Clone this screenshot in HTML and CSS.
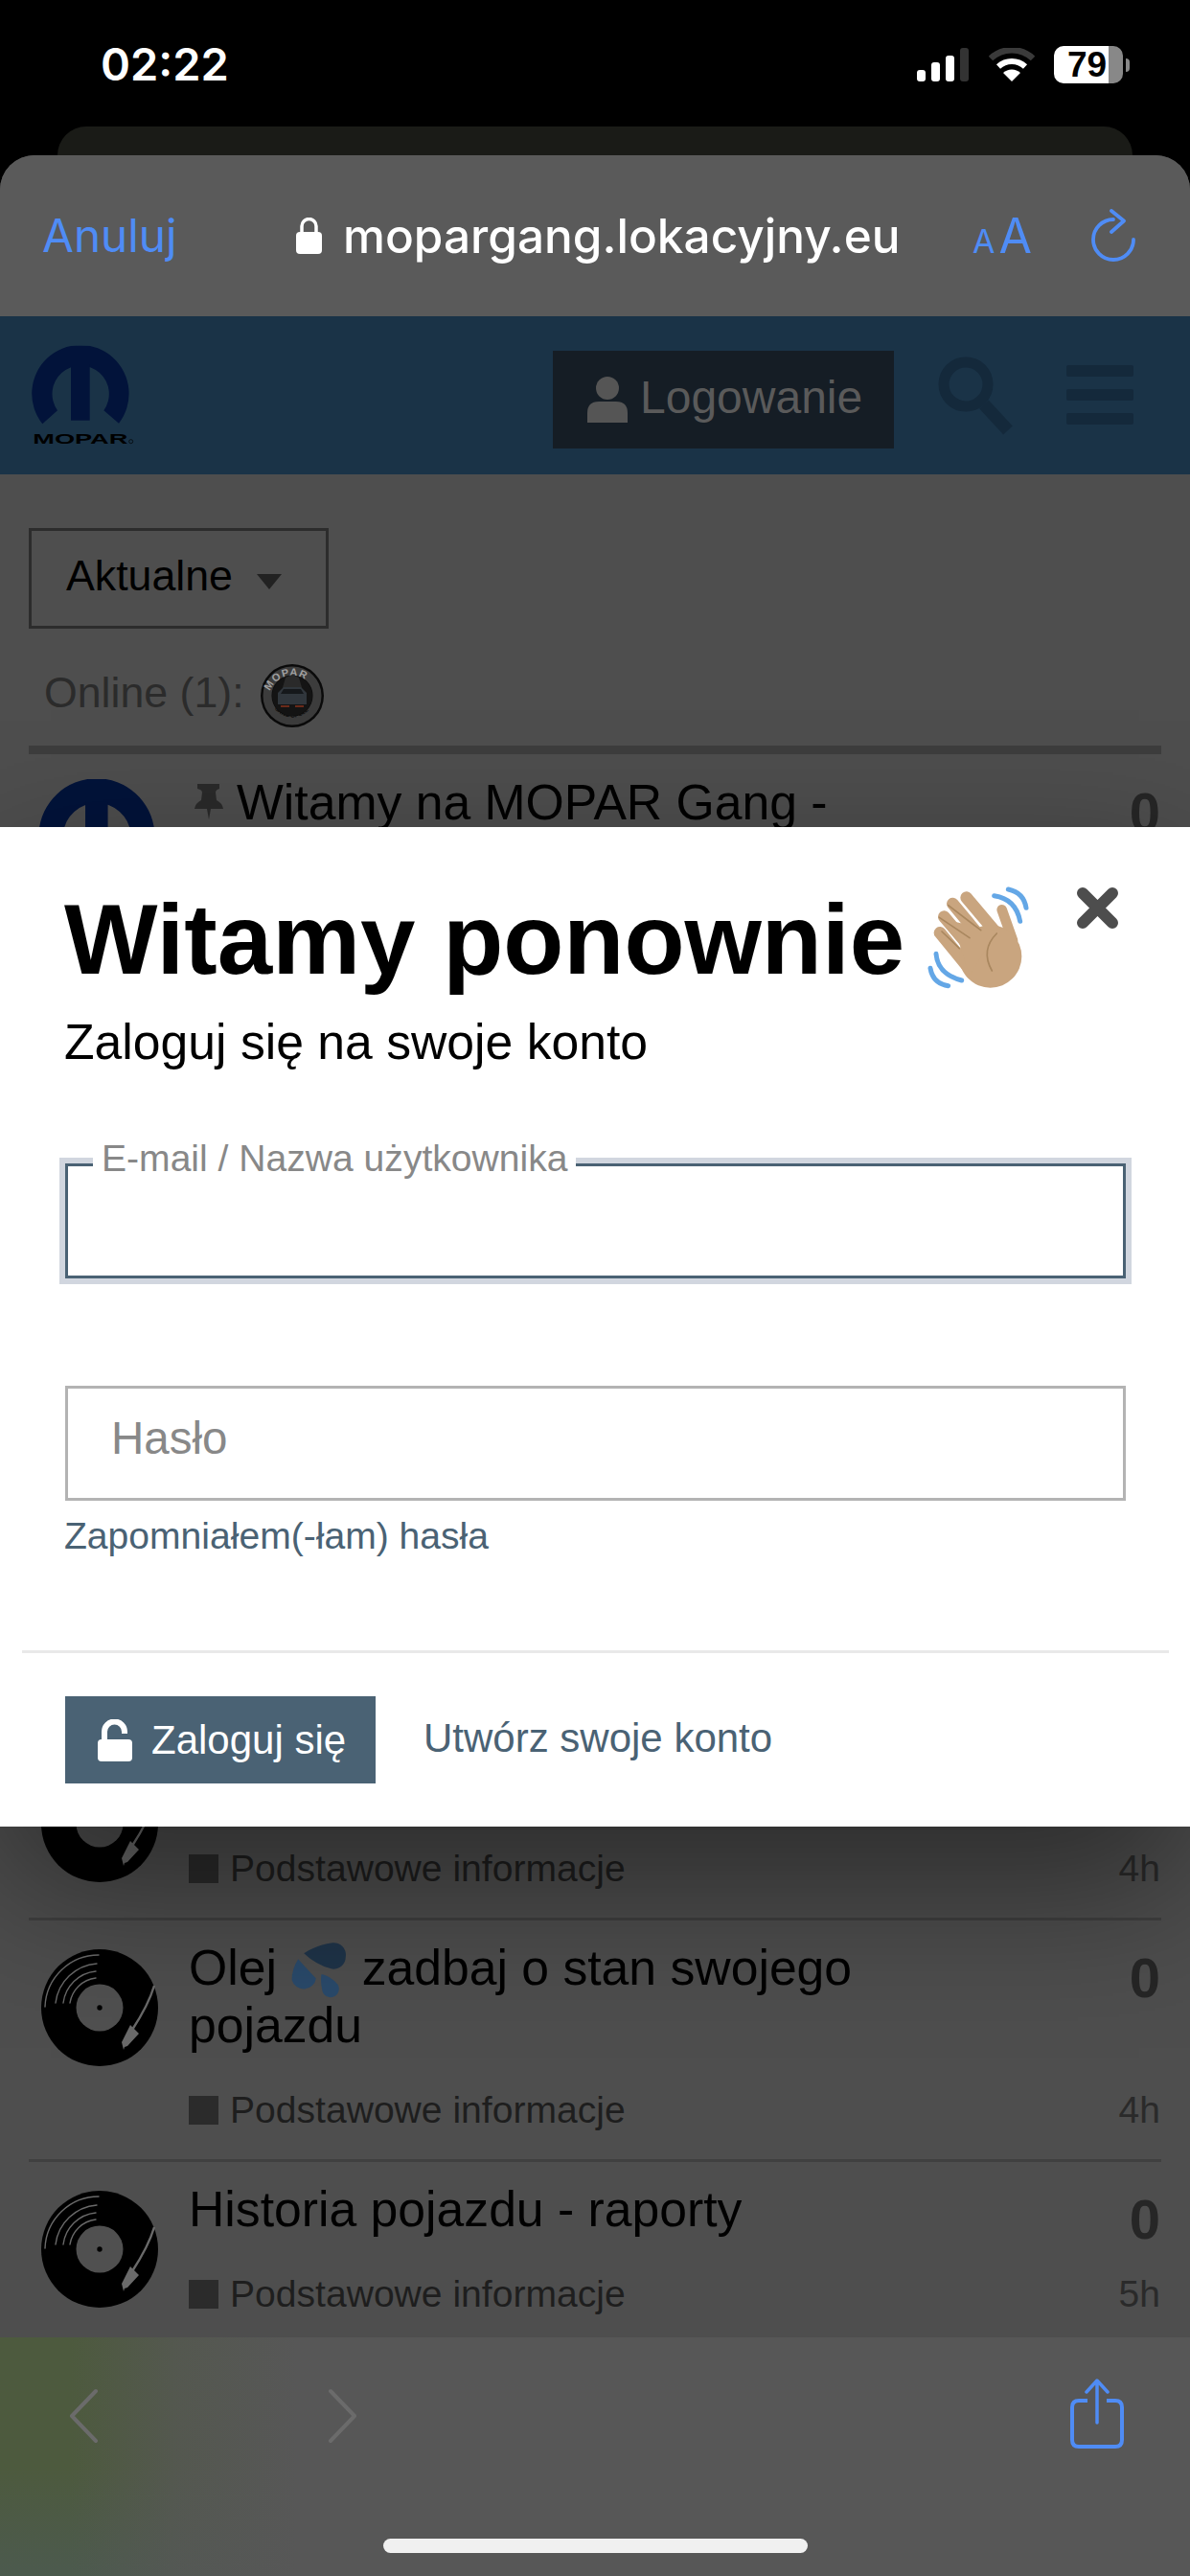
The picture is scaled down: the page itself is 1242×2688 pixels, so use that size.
FILE: index.html
```html
<!DOCTYPE html>
<html lang="pl">
<head>
<meta charset="utf-8">
<title>MOPAR Gang</title>
<link rel="stylesheet" href="styles.css">
</head>
<body>
<svg class="defs" aria-hidden="true">
  <defs>
    <symbol id="mopar-m" viewBox="99 62 306 246">
      <path d="M133 307A152 152 0 1 1 372 305L325 265A89 89 0 1 0 180 265Z"/>
      <rect x="222" y="120" width="59" height="176"/>
    </symbol>
    <symbol id="vinyl" viewBox="0 0 122 122">
      <circle cx="61" cy="61" r="61" fill="#000"/>
      <circle cx="61" cy="61" r="24.5" fill="#505050"/>
      <circle cx="61" cy="61" r="2.7" fill="#000"/>
      <g fill="none" stroke="#6a6a6a" stroke-width="1.4" stroke-linecap="round">
        <path d="M4 60A56 56 0 0 1 60 6"/>
        <path d="M15 56A47 47 0 0 1 58 15"/>
        <path d="M23 56A38 38 0 0 1 57 23"/>
        <path d="M30 56A31 31 0 0 1 57 30"/>
      </g>
      <path d="M118 38Q112 58 95 84" fill="none" stroke="#6a6a6a" stroke-width="2.4"/>
      <path d="M93 79L102 88L90 101L87 102L86 105L84 97Z" fill="#6a6a6a"/>
    </symbol>
  </defs>
</svg>
<div class="phone">
  <header class="status">
    <span class="clock">02:22</span>
    <div class="status-icons">
      <svg class="signal" viewBox="0 0 55 36"><rect x="0" y="23" width="9" height="12" rx="3" fill="#fff"/><rect x="15" y="15" width="9" height="20" rx="3" fill="#fff"/><rect x="30" y="8" width="9" height="27" rx="3" fill="#fff"/><rect x="45" y="0" width="9" height="35" rx="3" fill="#333"/></svg>
      <svg class="wifi" viewBox="0 0 48 36"><path d="M2 11A32 32 0 0 1 46 11" fill="none" stroke="#3a3a3a" stroke-width="6.5"/><path d="M10 19.5A20.5 20.5 0 0 1 38 19.5" fill="none" stroke="#fff" stroke-width="6"/><path d="M24 35L15 26A13 13 0 0 1 33 26Z" fill="#fff"/></svg>
      <div class="battery"><div class="battery-body"><span class="battery-num">79</span></div><div class="battery-nub"></div></div>
    </div>
  </header>
  <div class="backcard"></div>
  <div class="sheet">
    <nav class="urlbar">
      <span class="cancel">Anuluj</span>
      <div class="address">
        <svg class="urllock" viewBox="0 0 27 38"><path d="M6 17V9A7.500 7.500 0 0 1 21 9V17" fill="none" stroke="#fff" stroke-width="3.500"/><rect x="0" y="15" width="27" height="23" rx="4" fill="#fff"/></svg>
        <span class="url">mopargang.lokacyjny.eu</span>
      </div>
      <div class="aa"><span class="aa-small">A</span><span class="aa-large">A</span></div>
      <svg class="reload" viewBox="0 0 48 58"><path d="M45 32A21 21 0 1 1 24 11" fill="none" stroke="#4f8cf5" stroke-width="3.800" stroke-linecap="round"/><path d="M22 2L35 12.500L22 24" fill="none" stroke="#4f8cf5" stroke-width="3.800" stroke-linecap="round" stroke-linejoin="round"/></svg>
    </nav>

    <main class="page">
      <div class="site-header">
        <svg class="logo" viewBox="0 0 450 480">
          <use href="#mopar-m" x="99" y="62" width="306" height="246" fill="#02133a"/>
          <text x="103" y="368" textLength="297" lengthAdjust="spacingAndGlyphs" class="logo-text">MOPAR</text>
          <circle cx="410" cy="362" r="6" fill="none" stroke="#000" stroke-width="2"/>
        </svg>
        <div class="login-btn">
          <svg class="person" viewBox="0 0 42 48"><circle cx="21" cy="12" r="12" fill="#555"/><path d="M0 48V38Q0 26 12 26H30Q42 26 42 38V48Z" fill="#555"/></svg>
          <span class="login-text">Logowanie</span>
        </div>
        <svg class="search" viewBox="0 0 82 82"><circle cx="30" cy="29" r="23" fill="none" stroke="#14293b" stroke-width="11"/><path d="M49 50L74 77" stroke="#14293b" stroke-width="13"/></svg>
        <div class="burger"><i></i><i></i><i></i></div>
      </div>

      <div class="content">
        <div class="filter"><span class="filter-text">Aktualne</span><i class="caret"></i></div>
        <div class="online">
          <span class="online-text">Online (1):</span>
          <svg class="online-avatar" viewBox="0 0 66 66">
            <circle cx="33" cy="33" r="33" fill="#0a0a0a"/>
            <circle cx="33" cy="33" r="26" fill="none" stroke="#3c3c3c" stroke-width="9"/>
            <path id="arc-top" d="M8 37A25 25 0 0 1 58 37" fill="none"/>
            <text class="badge-text"><textPath href="#arc-top" startOffset="9">MOPAR</textPath></text>
            <path id="arc-bottom" d="M12 42A23 23 0 0 0 54 42" fill="none"/>
            <text class="badge-sub"><textPath href="#arc-bottom" startOffset="5">GANG OPOLE</textPath></text>
            <circle cx="33" cy="33" r="21" fill="#141414"/>
            <path d="M26 14L33 11L40 14L44 28H22Z" fill="#2a2a2a"/>
            <path d="M18 30L24 24H42L48 30V42H18Z" fill="#30363c"/>
            <path d="M24 26H42L45 31H21Z" fill="#15181b"/>
            <path d="M21 44H30M36 44H45" stroke="#6a2a1a" stroke-width="2"/>
          </svg>
        </div>
        <div class="rule-thick"></div>

        <article class="row row-pinned">
          <svg class="avatar" viewBox="0 0 306 246"><use href="#mopar-m" width="306" height="246" fill="#02133a"/></svg>
          <div class="row-main">
            <h2 class="row-title"><svg class="pin" viewBox="0 0 32 38"><path d="M4 0H27V5Q23 6 23 9L24 17Q30 20 31 26H18L16 37L14 26H1Q2 20 8 17L9 9Q9 6 4 5Z" fill="#2a2a2a"/></svg>Witamy na MOPAR Gang -</h2>
          </div>
          <div class="row-side"><span class="count">0</span></div>
        </article>

        <article class="row">
          <svg class="avatar"><use href="#vinyl"/></svg>
          <div class="row-main">
            <h2 class="row-title row-title-empty"></h2>
            <div class="meta"><i class="cat"></i><span>Podstawowe informacje</span></div>
          </div>
          <div class="row-side"><span class="count">0</span><span class="age">4h</span></div>
        </article>

        <article class="row">
          <svg class="avatar"><use href="#vinyl"/></svg>
          <div class="row-main">
            <h2 class="row-title">Olej <svg class="drops" viewBox="845 35 190 190"><path d="M890 77Q930 50 985 42A40 40 0 0 1 1028 88A40 40 0 0 1 980 128Q930 115 890 77Z" fill="#1f3449"/><path d="M871 96Q892 120 930 160A41 41 0 0 1 850 165Q850 130 871 96Z" fill="#2a4a6b"/><path d="M948 146Q975 150 1002 180A28 28 0 1 1 950 196Q944 170 948 146Z" fill="#2a4a6b"/></svg> zadbaj o stan swojego pojazdu</h2>
            <div class="meta"><i class="cat"></i><span>Podstawowe informacje</span></div>
          </div>
          <div class="row-side"><span class="count">0</span><span class="age">4h</span></div>
        </article>

        <article class="row">
          <svg class="avatar"><use href="#vinyl"/></svg>
          <div class="row-main">
            <h2 class="row-title">Historia pojazdu - raporty</h2>
            <div class="meta"><i class="cat"></i><span>Podstawowe informacje</span></div>
          </div>
          <div class="row-side"><span class="count">0</span><span class="age">5h</span></div>
        </article>
      </div>

      <section class="modal">
        <svg class="close" viewBox="0 0 45 45"><path d="M7 7L38 38M38 7L7 38" stroke="#4d4d4d" stroke-width="12" stroke-linecap="round"/></svg>
        <div class="modal-head">
          <h1>Witamy ponownie</h1>
          <svg class="wave" viewBox="80 108 330 330">
            <g fill="none" stroke="#64a7e6" stroke-width="15" stroke-linecap="round">
              <path d="M336 120Q384 130 392 178"/>
              <path d="M292 140Q360 150 373 220"/>
              <path d="M110 322Q115 385 190 405"/>
              <path d="M92 367Q100 415 148 422"/>
            </g>
            <g fill="none" stroke="#c9a57f" stroke-linecap="round">
              <path d="M205 146L310 270" stroke-width="38"/>
              <path d="M162 165L270 295" stroke-width="38"/>
              <path d="M135 206L240 330" stroke-width="38"/>
              <path d="M122 256L215 370" stroke-width="38"/>
              <path d="M316 184L350 280" stroke-width="32"/>
            </g>
            <circle cx="280" cy="330" r="98" fill="#c9a57f"/>
            <path d="M160 220L300 250L215 390Z" fill="#c9a57f"/>
            <g fill="none" stroke="#a9875f" stroke-width="5" stroke-linecap="round">
              <path d="M148 170L250 248"/>
              <path d="M120 208L215 272"/>
              <path d="M128 252L183 305"/>
              <path d="M300 258Q248 310 285 375"/>
            </g>
          </svg>
        </div>
        <p class="modal-sub">Zaloguj się na swoje konto</p>

        <div class="field field-active">
          <input class="field-input" id="login" type="text">
          <label class="float-label" for="login">E-mail / Nazwa użytkownika</label>
        </div>
        <div class="field field-password">
          <input class="field-input" id="password" type="password">
          <label class="inner-label" for="password">Hasło</label>
        </div>
        <a class="forgot">Zapomniałem(-łam) hasła</a>

        <div class="modal-rule"></div>

        <div class="actions">
          <button class="submit" type="button">
            <svg class="lock-open" viewBox="0 0 36 44"><path d="M7 24V13A10.500 10.500 0 0 1 28 13V15" fill="none" stroke="#fff" stroke-width="6"/><rect x="0" y="21" width="36" height="23" rx="4" fill="#fff"/></svg>
            <span>Zaloguj się</span>
          </button>
          <a class="signup">Utwórz swoje konto</a>
        </div>
      </section>
    </main>

    <footer class="bottombar">
      <div class="bottom-icons">
        <svg class="chev" viewBox="0 0 32 58"><path d="M29 3L4 29L29 55" fill="none" stroke="#6b6b6b" stroke-width="4" stroke-linecap="round" stroke-linejoin="round"/></svg>
        <svg class="chev chev-next" viewBox="0 0 32 58"><path d="M3 3L28 29L3 55" fill="none" stroke="#6b6b6b" stroke-width="4" stroke-linecap="round" stroke-linejoin="round"/></svg>
        <svg class="share" viewBox="0 0 56 74"><path d="M18 23H9Q2 23 2 30V64Q2 71 9 71H47Q54 71 54 64V30Q54 23 47 23H38" fill="none" stroke="#4f8cf5" stroke-width="4"/><path d="M28 46V3M17 14L28 2L39 14" fill="none" stroke="#4f8cf5" stroke-width="3.500" stroke-linecap="round" stroke-linejoin="round"/></svg>
      </div>
      <div class="home-indicator"></div>
    </footer>
  </div>
</div>
</body>
</html>
```

FILE: styles.css
```css
* { box-sizing: border-box; }

html, body {
  margin: 0;
  padding: 0;
  background: #000;
}

body {
  font-family: "Liberation Sans", Arial, sans-serif;
  color: #000;
}

.defs {
  display: block;
  width: 0;
  height: 0;
}

.phone {
  width: 1242px;
  height: 2688px;
  display: flex;
  flex-direction: column;
  overflow: hidden;
  background: #000;
}

/* status bar */
.status {
  flex: none;
  height: 132px;
  display: flex;
  align-items: flex-start;
  justify-content: space-between;
  padding: 45px 63px 0 105px;
}

.clock {
  font-family: Inter, sans-serif;
  font-weight: 600;
  font-size: 47px;
  line-height: 44px;
  color: #fff;
}

.status-icons {
  display: flex;
  align-items: flex-start;
  gap: 20px;
}

.signal {
  width: 55px;
  height: 36px;
  margin-top: 5px;
}

.wifi {
  width: 48px;
  height: 36px;
  margin-top: 5px;
}

.battery {
  display: flex;
  align-items: center;
  gap: 3px;
  margin-top: 3px;
}

.battery-body {
  width: 72px;
  height: 39px;
  border-radius: 10px;
  background: linear-gradient(to right, #fff 0, #fff 79%, #888 79%, #888 100%);
  display: flex;
  align-items: center;
  padding-left: 14px;
}

.battery-num {
  font-family: "Liberation Sans", Arial, sans-serif;
  font-weight: 700;
  font-size: 37px;
  line-height: 36px;
  color: #000;
}

.battery-nub {
  width: 4px;
  height: 14px;
  border-radius: 0 4px 4px 0;
  background: #888;
}

.backcard {
  flex: none;
  height: 30px;
  margin: 0 60px;
  background: #1a1b17;
  border-radius: 30px 30px 0 0;
}

.sheet {
  flex: 1;
  min-height: 0;
  display: flex;
  flex-direction: column;
  border-radius: 36px 36px 0 0;
  overflow: hidden;
  background: #5a5a5a;
}

/* browser url bar */
.urlbar {
  flex: none;
  height: 168px;
  display: flex;
  align-items: flex-start;
  padding: 0 56px 0 44px;
  background: #5a5a5a;
}

.cancel {
  font-family: Inter, sans-serif;
  font-size: 47.7px;
  line-height: 56px;
  margin-top: 56px;
  color: #4f8cf5;
  width: 265px;
  flex: none;
}

.address {
  display: flex;
  align-items: flex-start;
  gap: 22px;
  width: 706px;
  flex: none;
}

.urllock {
  width: 27px;
  height: 38px;
  margin-top: 65px;
  flex: none;
}

.url {
  font-family: Inter, sans-serif;
  font-weight: 500;
  font-size: 49.5px;
  line-height: 56px;
  margin-top: 56px;
  color: #fff;
  white-space: nowrap;
}

.aa {
  display: flex;
  align-items: baseline;
  gap: 4px;
  width: 90px;
  flex: none;
  height: 56px;
  margin-top: 56px;
  font-family: Inter, sans-serif;
  font-weight: 400;
  color: #4f8cf5;
}

.aa-small {
  font-size: 34px;
  line-height: 56px;
}

.aa-large {
  font-size: 50px;
  line-height: 56px;
}

.reload {
  width: 48px;
  height: 58px;
  margin: 56px 0 0 auto;
  flex: none;
}

/* page behind the modal */
.page {
  position: relative;
  flex: 1;
  min-height: 0;
  overflow: hidden;
  background: #4e4e4e;
}

.site-header {
  height: 165px;
  display: flex;
  align-items: flex-start;
  background: #1a3347;
}

.logo {
  width: 150px;
  height: 160px;
  margin-top: 10px;
  flex: none;
}

.logo-text {
  font-family: "Liberation Sans", Arial, sans-serif;
  font-weight: 700;
  font-size: 46px;
  fill: #000;
}

.login-btn {
  display: flex;
  align-items: center;
  gap: 13px;
  width: 356px;
  height: 102px;
  margin: 36px 0 0 427px;
  padding-left: 36px;
  background: #151d25;
  color: #5a5a5a;
  font-size: 48px;
  flex: none;
}

.login-text {
  margin-bottom: 6px;
}

.person {
  width: 42px;
  height: 48px;
  flex: none;
}

.search {
  width: 82px;
  height: 82px;
  margin: 42px 0 0 45px;
  flex: none;
}

.burger {
  display: flex;
  flex-direction: column;
  gap: 13px;
  width: 70px;
  margin: 51px 0 0 53px;
  flex: none;
}

.burger i {
  display: block;
  height: 12px;
  border-radius: 2px;
  background: #14293b;
}

.content {
  padding: 56px 30px 0;
}

.filter {
  display: flex;
  align-items: center;
  gap: 25px;
  width: 313px;
  height: 105px;
  padding-left: 36px;
  border: 3px solid #2c2c2c;
  font-size: 44.7px;
  color: #000;
}

.filter-text {
  margin-bottom: 6px;
}

.caret {
  width: 0;
  height: 0;
  margin-top: 6px;
  border-left: 13px solid transparent;
  border-right: 13px solid transparent;
  border-top: 16px solid #222;
}

.online {
  display: flex;
  align-items: center;
  gap: 17px;
  margin-top: 37px;
  padding-left: 16px;
  font-size: 44.7px;
  color: #2b2b2b;
}

.online-text {
  margin-bottom: 6px;
}

.online-avatar {
  width: 66px;
  height: 66px;
  flex: none;
}

.badge-text {
  font-family: "Liberation Sans", Arial, sans-serif;
  font-weight: 700;
  font-size: 11px;
  letter-spacing: 1px;
  fill: #a0a0a0;
}

.badge-sub {
  font-family: "Liberation Sans", Arial, sans-serif;
  font-weight: 700;
  font-size: 6px;
  fill: #0f0f0f;
}

.rule-thick {
  height: 9px;
  margin-top: 19px;
  background: #3d3d3d;
}

.row {
  display: grid;
  grid-template-columns: 167px 1fr auto;
  padding: 19px 1px 36px 0;
  border-top: 3px solid #404040;
}

.row-pinned {
  min-height: 1022px;
  padding-top: 20px;
  border-top: 0;
}

.avatar {
  width: 122px;
  height: 122px;
  margin: 11px 0 0 13px;
}

.row-pinned .avatar {
  height: 98px;
  margin: 6px 0 0 10px;
  overflow: visible;
}

.row-title {
  margin: 0;
  min-height: 60px;
  font-weight: 400;
  font-size: 51.7px;
  line-height: 60px;
  color: #000;
}

.pin {
  width: 32px;
  height: 38px;
  margin: 0 13px 0 5px;
  vertical-align: -1px;
}

.drops {
  width: 60px;
  height: 60px;
  margin: -4px 0;
  vertical-align: -10px;
}

.row-main {
  max-width: 760px;
}

.meta {
  display: flex;
  align-items: flex-start;
  gap: 12px;
  margin-top: 44px;
  font-size: 39.1px;
  line-height: 30px;
  color: #1e1e1e;
}

.cat {
  width: 31px;
  height: 30px;
  background: #2b2b2b;
  flex: none;
}

.row-side {
  display: flex;
  flex-direction: column;
  align-items: flex-end;
  justify-content: space-between;
}

.count {
  margin-top: 11px;
  font-weight: 700;
  font-size: 58px;
  line-height: 60px;
  color: #262626;
}

.age {
  font-size: 39px;
  line-height: 30px;
  color: #2a2a2a;
}

/* modal */
.modal {
  position: absolute;
  top: 533px;
  left: 0;
  right: 0;
  padding: 55px 67px 45px;
  background: #fff;
  box-shadow: 0 60px 150px rgba(0, 0, 0, 0.45);
}

.close {
  position: absolute;
  top: 62px;
  right: 74px;
  width: 45px;
  height: 45px;
}

.modal-head {
  display: flex;
  align-items: flex-start;
  gap: 23px;
}

.modal-head h1 {
  margin: 0;
  font-weight: 700;
  font-size: 103.3px;
  line-height: 124px;
  white-space: nowrap;
}

.wave {
  width: 110px;
  height: 110px;
  margin-top: 6px;
  flex: none;
}

.modal-sub {
  margin: 14px 0 0;
  font-size: 51.7px;
  line-height: 62px;
}

.field {
  position: relative;
  width: 1107px;
  height: 120px;
  margin-left: 1px;
}

.field-active {
  margin-top: 96px;
}

.field-password {
  margin-top: 112px;
}

.field-input {
  display: block;
  width: 100%;
  height: 100%;
  margin: 0;
  padding: 0;
  border: 3px solid #b3b3b3;
  border-radius: 0;
  background: #fff;
  outline: none;
}

.field-active .field-input {
  border-color: #4a6274;
  box-shadow: 0 0 0 6px #d1d6df;
}

.float-label {
  position: absolute;
  top: -25px;
  left: 29px;
  padding: 0 9px;
  background: #fff;
  color: #888;
  font-size: 39.1px;
  line-height: 40px;
}

.inner-label {
  position: absolute;
  top: 27px;
  left: 48px;
  color: #888;
  font-size: 47.5px;
  line-height: 56px;
}

.forgot {
  display: block;
  margin-top: 14px;
  color: #4a6274;
  font-size: 39.1px;
  line-height: 46px;
}

.modal-rule {
  height: 3px;
  margin: 96px -45px 0 -44px;
  background: #e9e9e9;
}

.actions {
  display: flex;
  align-items: center;
  gap: 50px;
  margin: 45px 0 0 1px;
}

.submit {
  display: flex;
  align-items: center;
  gap: 20px;
  width: 324px;
  height: 91px;
  padding: 0 0 0 34px;
  border: 0;
  background: #4a6274;
  color: #fff;
  font-family: "Liberation Sans", Arial, sans-serif;
  font-size: 42px;
}

.lock-open {
  width: 36px;
  height: 44px;
  flex: none;
}

.signup {
  margin-bottom: 3px;
  color: #4a6274;
  font-size: 42px;
}

/* bottom toolbar */
.bottombar {
  flex: none;
  height: 249px;
  display: flex;
  flex-direction: column;
  background:
    linear-gradient(to right, rgba(87, 87, 87, 0) 0, rgba(87, 87, 87, 0) 6%, rgba(87, 87, 87, 0.7) 15%, #575757 25%),
    linear-gradient(to bottom, #4d5a3e 0, #4d5a3e 55%, #4c5a4e 100%);
}

.bottom-icons {
  display: flex;
  align-items: flex-start;
  height: 210px;
  padding: 53px 69px 0 71px;
}

.chev {
  width: 32px;
  height: 58px;
  flex: none;
}

.chev-next {
  margin-left: 239px;
}

.share {
  width: 56px;
  height: 74px;
  margin: -10px 0 0 auto;
  flex: none;
}

.home-indicator {
  width: 443px;
  height: 15px;
  margin: 0 auto;
  border-radius: 8px;
  background: #f0f0f0;
}
```
